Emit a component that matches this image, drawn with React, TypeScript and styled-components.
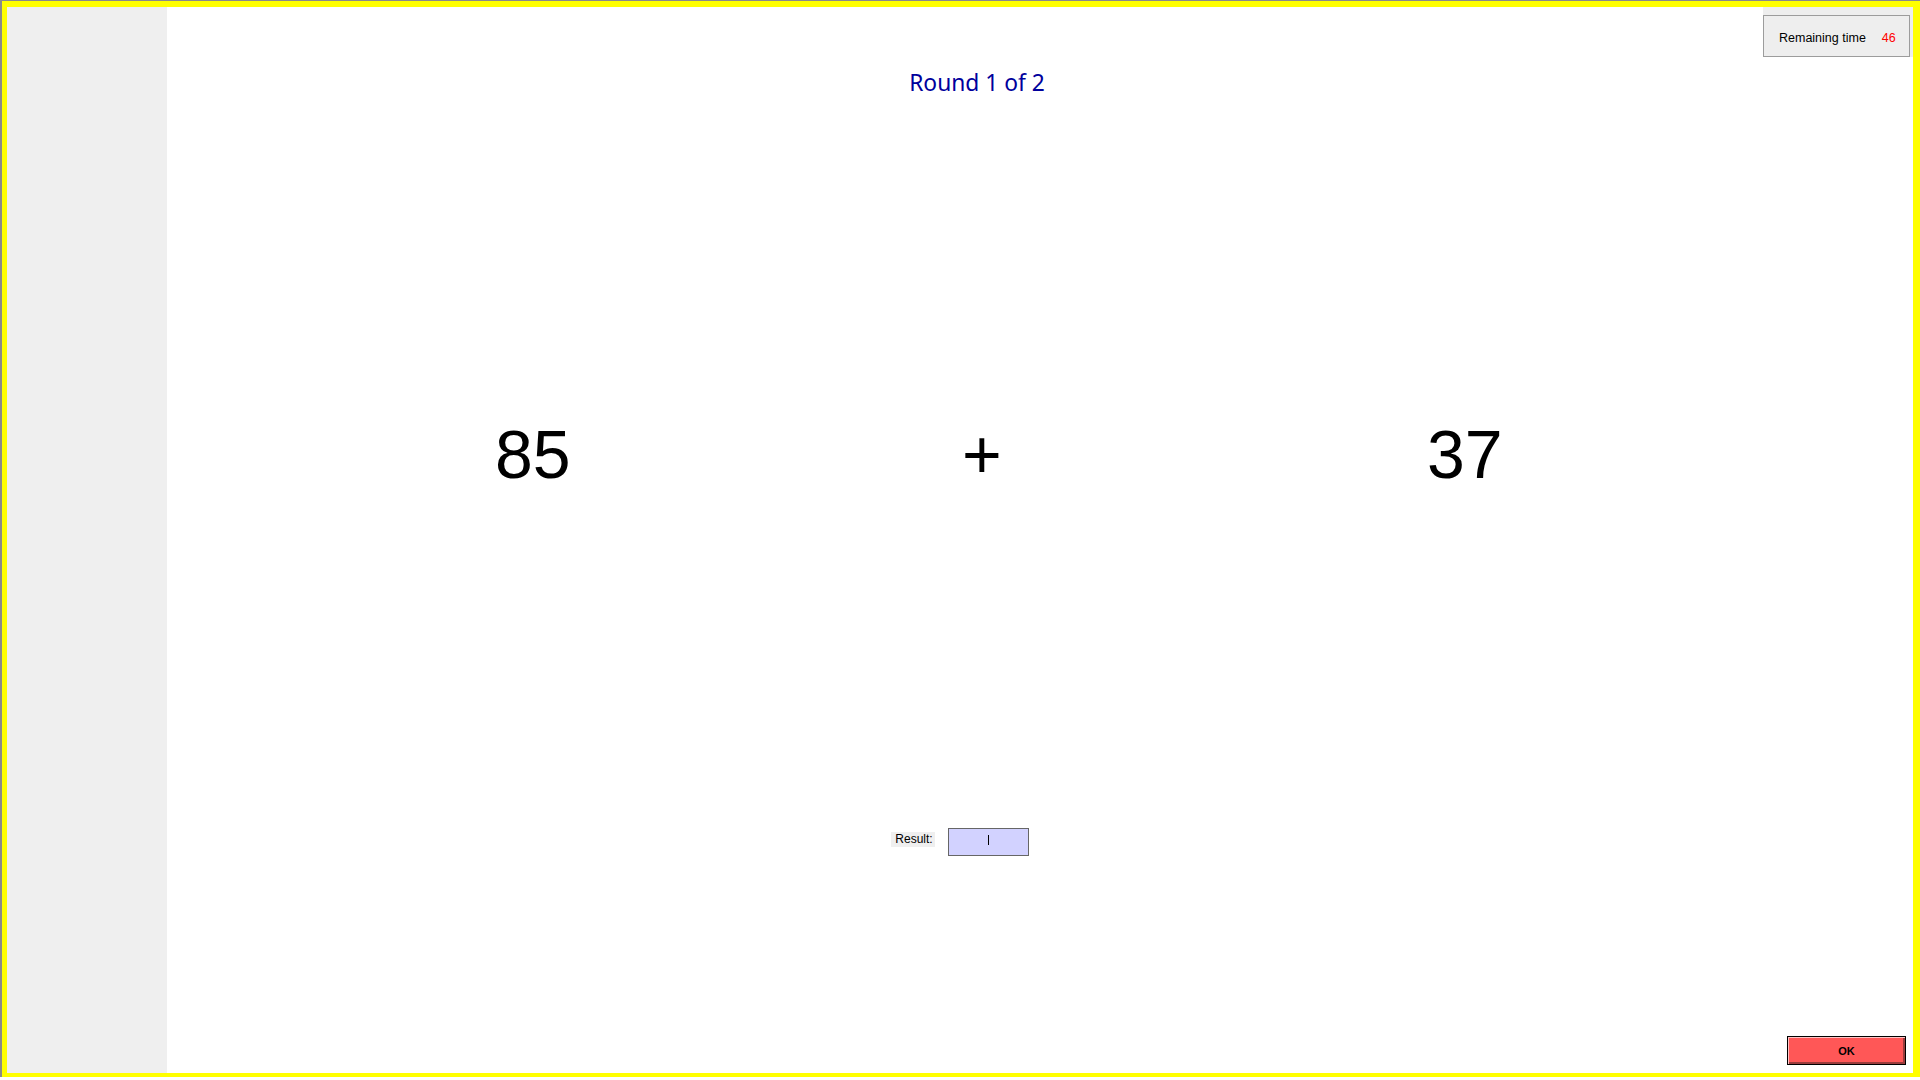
import React from "react";
import styled, { createGlobalStyle } from "styled-components";

const GlobalStyle = createGlobalStyle`
  html, body {
    margin: 0;
    padding: 0;
    background: #ffffff;
    font-family: "Liberation Sans", Arial, sans-serif;
  }
  * { box-sizing: border-box; }
`;

const Frame = styled.div`
  width: 1920px;
  height: 1077px;
  border-top: 1px solid #8a8a8a;
  border-left: 2px solid #8a8a8a;
  background: #ffffff;
`;

const Window = styled.div`
  height: 100%;
  border-style: solid;
  border-color: #ffff00;
  border-width: 6px 7px 4px 5px;
  display: flex;
  background: #ffffff;
`;

const Sidebar = styled.aside`
  width: 160px;
  flex: none;
  background: #efefef;
`;

const Main = styled.main`
  flex: 1;
  display: flex;
  flex-direction: column;
  min-width: 0;
`;

const TopBar = styled.div`
  height: 50px;
  display: flex;
  justify-content: flex-end;
`;

const TimerPanel = styled.div`
  width: 150px;
  background: #eeeeee;
  padding: 8px 3px 0 0;
  display: flex;
`;

const TimerBox = styled.div`
  flex: 1;
  border: 1px solid #9c9c9c;
  display: flex;
  align-items: center;
  padding: 4px 0 0 15px;
  gap: 16px;
  font-size: 12.5px;
  color: #000000;
`;

const TimerValue = styled.span`
  color: #ff0000;
`;

const Title = styled.h1`
  margin: 12px 0 0 0;
  padding-right: 126px;
  text-align: center;
  font-family: "Noto Sans", "DejaVu Sans", sans-serif;
  font-weight: 400;
  font-size: 22.8px;
  line-height: 28px;
  color: #00009c;
`;

const Operands = styled.div`
  margin-top: 323px;
  padding-left: 328px;
  display: grid;
  grid-template-columns: 467px 465px auto;
`;

const Operand = styled.div`
  font-family: "Liberation Sans", Arial, sans-serif;
  font-size: 68px;
  line-height: 68px;
  color: #000000;
`;

const ResultRow = styled.div`
  margin-top: 340px;
  padding-right: 160px;
  display: flex;
  justify-content: center;
  align-items: flex-start;
  gap: 13px;
`;

const ResultLabel = styled.label`
  margin-top: 4px;
  height: 15px;
  line-height: 15px;
  padding: 0 2px 0 4px;
  background: #efefef;
  font-size: 12px;
  color: #000000;
`;

const ResultField = styled.div`
  width: 81px;
  height: 28px;
  border: 1px solid #666666;
  background: #d2d2ff;
  display: flex;
  justify-content: center;
  padding-top: 6px;
`;

const Caret = styled.span`
  width: 1px;
  height: 10px;
  background: #000000;
`;

const Footer = styled.div`
  flex: 1;
  display: flex;
  justify-content: flex-end;
  align-items: flex-end;
  padding: 0 7px 8px 0;
`;

const OkButton = styled.button`
  width: 119px;
  height: 29px;
  padding: 0;
  border: 1px solid #000000;
  background: #ff5757;
  box-shadow: inset 1px 1px 0 #ffc4c4, inset -2px -2px 0 #9a3c3c;
  font-family: "Liberation Sans", Arial, sans-serif;
  font-weight: 700;
  font-size: 11px;
  color: #000000;
  cursor: pointer;
`;

export default function App() {
  return (
    <>
      <GlobalStyle />
      <Frame>
        <Window>
          <Sidebar />
          <Main>
            <TopBar>
              <TimerPanel>
                <TimerBox>
                  <span>Remaining time</span>
                  <TimerValue>46</TimerValue>
                </TimerBox>
              </TimerPanel>
            </TopBar>
            <Title>Round 1 of 2</Title>
            <Operands>
              <Operand>85</Operand>
              <Operand>+</Operand>
              <Operand>37</Operand>
            </Operands>
            <ResultRow>
              <ResultLabel>Result:</ResultLabel>
              <ResultField>
                <Caret />
              </ResultField>
            </ResultRow>
            <Footer>
              <OkButton>OK</OkButton>
            </Footer>
          </Main>
        </Window>
      </Frame>
    </>
  );
}
